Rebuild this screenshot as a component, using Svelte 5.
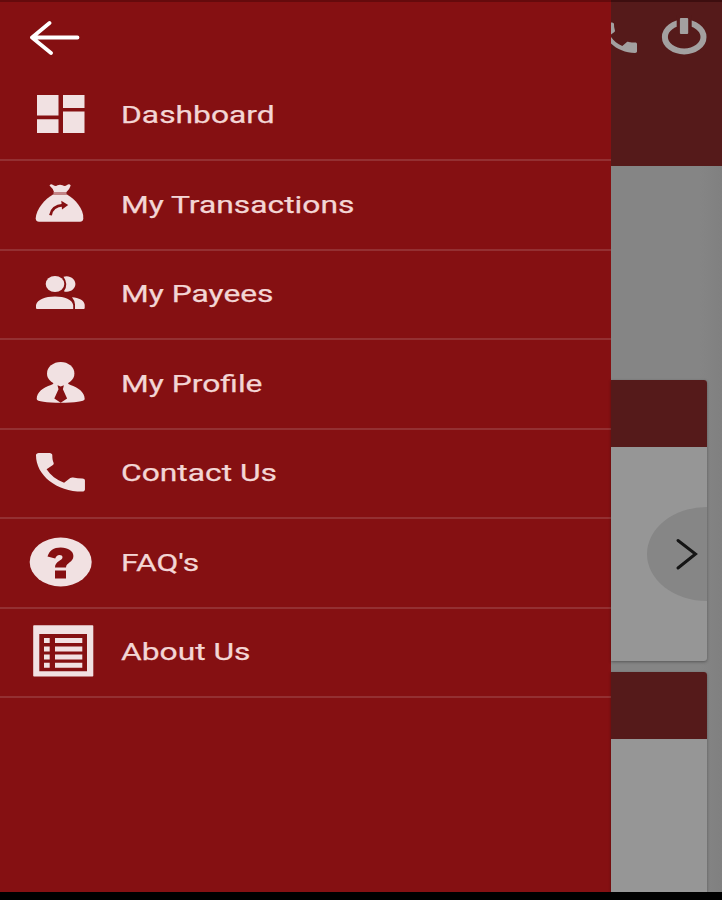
<script lang="ts">
	type MenuItem = { id: string; label: string };

	const items: MenuItem[] = [
		{ id: 'dashboard', label: 'Dashboard' },
		{ id: 'transactions', label: 'My Transactions' },
		{ id: 'payees', label: 'My Payees' },
		{ id: 'profile', label: 'My Profile' },
		{ id: 'contact', label: 'Contact Us' },
		{ id: 'faq', label: "FAQ's" },
		{ id: 'about', label: 'About Us' },
	];

	const phone =
		'M6.900 10.600c1.440 2.830 3.600 4.900 6.430 6.350l2.270-2.250c.27-.27.67-.3 1.020-.24 1.120.3 2.330.4 3.450.4.55 0 .93.4.93.95V20c0 .55-.45 1-1 1-9.390 0-17-7.610-17-17 0-.55.45-1 1-1h4c.55 0 1 .45 1 1 0 1.250.1 2.450.47 3.570.11.35.03.74-.25 1.020z';
</script>

<div class="screen">
	<div class="main">
		<nav class="drawer">
			<button type="button" class="back" aria-label="Back">
				<svg width="52" height="36" viewBox="0 0 52 36">
					<path d="M49.5 18.5H4M21.5 4 4 18.5 23 34" />
				</svg>
			</button>

			{#each items as item}
				<button type="button" class="item">
					<svg class="icon" width="66" height="56" viewBox="0 0 66 56">
						{#if item.id === 'dashboard'}
							<path d="M8 8h21.5v20.5H8zM8 32.3h21.5V46H8zM34 8h21.5v13H34zM34 24.5h21.5V46H34z" />
						{:else if item.id === 'transactions'}
							<path d="M20.5 8.500Q22 6.500 24 8q3 1.800 4.500.3 2.500-1.300 5 0 2.500 1.500 4.500-.3 2.500-1.500 3.700.5-1 3.500-4.200 6.500H25q-1-3.500-4.500-6.500z" />
							<path class="band" d="M24.500 15h13v2.200h-13z" />
							<path d="M24 17.500h14C46 22 55 32 54.300 41.500Q54 44.700 51 44.700H10Q7 44.700 6.700 41.500C7 32 16 22 24 17.500z" />
							<path class="cut-line" d="M21.500 38.200Q23 29 34 28.200" />
							<path class="cut" d="m32.300 23.800 6.900 4.200-6.200 4.600z" />
						{:else if item.id === 'payees'}
							<ellipse cx="26" cy="18" rx="9.300" ry="8" />
							<path d="M34.500 10.700Q37 9.900 39.500 10.400c4 .8 6.900 3.800 6.900 7.600 0 4.500-4.500 8-9 7.700q-1.300 0-2.500-.5 5-7-.4-14.500z" />
							<path d="M8 43q-1 0-1-1v-3C8.500 33.500 16 30.500 26 30.500s17 3 18.200 8.500v4zM43 31.300c7 .4 12.200 3.200 12.700 7.500V42q0 1-1 1h-8.700v-4.500q-.3-4-3-7.200z" />
						{:else if item.id === 'profile'}
							<ellipse cx="31.700" cy="17.400" rx="13.700" ry="11.400" />
							<path d="M25 26h13.500q.5 2.500 3 3C49 31.500 55.700 36 55.700 43c0 2.500-10 3.700-24 3.700S7.700 45.500 7.700 43c0-7 6.500-11.500 14.300-14q2.500-.5 3-3z" />
							<path class="cut" d="m28.500 29.300 3.200 1.200 3.200-1.200-1 4 4.200 9.200-6.400 4.300-6.400-4.300 4.200-9.200z" />
						{:else if item.id === 'contact'}
							<path transform="matrix(2.720 0 0 2.140 -1.170 1.600)" d={phone} />
						{:else if item.id === 'faq'}
							<ellipse cx="31.700" cy="27" rx="31" ry="24.400" />
							<path class="cut" d="M18.500 21.400C20.500 15.500 24.500 12.400 31.700 12.400c7.500 0 12.700 3.500 12.700 8.600 0 6.500-7.400 6.700-7.400 11.400H26c0-6.400 7.500-6.700 7.500-10.200 0-1.500-1.200-2.200-3-2.200-2.200 0-3.300 1.300-4.300 3.600zM26 35.600h11v7.900H26z" />
						{:else}
							<path fill-rule="evenodd" d="M5 1.300h58.500q.8 0 .8.800v49.700q0 .8-.8.800H5q-.8 0-.8-.8V2.100q0-.8.800-.8zM10.300 9.900v37.300H58V9.900z" />
							<path d="M15 14h5.700v5H15zM15 22.400h5.700v5H15zM15 30.500h5.700v5H15zM15 38.700h5.700v5H15zM26 14h27.300v5H26zM26 22.400h27.300v5H26zM26 30.500h27.300v5H26zM26 38.700h27.300v5H26z" />
						{/if}
					</svg>
					<span class="label">{item.label}</span>
				</button>
			{/each}
		</nav>

		<!-- dimmed page behind the open drawer -->
		<div class="page">
			<header class="topbar">
				<svg width="111" height="60" viewBox="611 0 111 60">
					<path transform="matrix(1.920 0 0 1.700 596.700 17.300)" d={phone} />
					<ellipse class="ring" cx="684.200" cy="37" rx="19.300" ry="14.400" />
					<path class="gap" d="M676.700 15h15v14h-15z" />
					<rect x="679.900" y="18" width="8.300" height="16" rx="1" />
				</svg>
			</header>

			<section class="card first">
				<div class="card-head"></div>
				<div class="card-body">
					<div class="next">
						<svg width="26" height="36" viewBox="0 0 26 36">
							<path d="M3 4.500 20.500 18 3 32" />
						</svg>
					</div>
				</div>
			</section>
			<section class="card last">
				<div class="card-head"></div>
				<div class="card-body"></div>
			</section>
		</div>
	</div>
</div>

<style>
	:global(body) {
		margin: 0;
		background: #000;
	}

	.screen {
		width: 722px;
		height: 900px;
		overflow: hidden;
		background: #000;
		font-family: Roboto, 'Liberation Sans', sans-serif;
	}

	.main {
		display: flex;
		height: 891.5px;
	}

	button {
		padding: 0;
		border: 0;
		background: none;
		font: inherit;
		text-align: left;
	}

	.drawer {
		box-sizing: border-box;
		width: 611px;
		flex-shrink: 0;
		border-top: 2px solid #650a0c;
		background: #851012;
	}

	.back {
		display: block;
		padding: 17px 0 16.6px 28px;
	}

	.back svg {
		display: block;
		fill: none;
		stroke: #fff;
		stroke-width: 3.8;
		stroke-linecap: round;
		stroke-linejoin: round;
	}

	.item {
		display: flex;
		align-items: center;
		width: 100%;
		height: 89.5px;
		box-sizing: border-box;
		padding-left: 29px;
		border-bottom: 2px solid #943032;
	}

	.icon {
		flex-shrink: 0;
		fill: #f1e1e2;
	}

	.band {
		fill: #c48587;
	}

	.cut {
		fill: #851012;
	}

	.cut-line {
		fill: none;
		stroke: #851012;
		stroke-width: 2.8;
	}

	.label {
		margin-left: 26px;
		font-size: 24.5px;
		line-height: 30px;
		white-space: nowrap;
		color: #f3d6d5;
		-webkit-text-stroke: 0.25px #f3d6d5;
		transform: scaleX(1.297);
		transform-origin: left center;
	}

	.page {
		display: flex;
		flex-direction: column;
		flex: 1;
		background: linear-gradient(90deg, #858585 80%, #808080);
	}

	.topbar {
		box-sizing: border-box;
		height: 166px;
		flex-shrink: 0;
		border-top: 2px solid #3d0e0f;
		background: #551a1a;
	}

	.topbar svg {
		display: block;
		margin-top: -2px;
		fill: #a3a0a0;
	}

	.topbar .ring {
		fill: none;
		stroke: #a3a0a0;
		stroke-width: 6;
	}

	.topbar .gap {
		fill: #551a1a;
	}

	.card {
		display: flex;
		flex-direction: column;
		width: 96px;
		overflow: hidden;
		border-radius: 0 3px 3px 0;
		background: #969696;
		box-shadow: 0 1px 3px rgba(0, 0, 0, 0.35);
	}

	.first {
		height: 281px;
		margin-top: 213.5px;
	}

	.last {
		flex: 1;
		margin-top: 11.5px;
		border-bottom-right-radius: 0;
	}

	.card-head {
		height: 67px;
		flex-shrink: 0;
		background: #551a1a;
	}

	.card-body {
		flex: 1;
	}

	.next {
		box-sizing: border-box;
		width: 60px;
		height: 94px;
		margin: 60px 0 0 36px;
		padding: 29px 0 0 28px;
		border-radius: 60px 0 0 60px / 47px 0 0 47px;
		background: #868686;
	}

	.next svg {
		display: block;
		fill: none;
		stroke: #151515;
		stroke-width: 3;
		stroke-linecap: round;
	}
</style>
